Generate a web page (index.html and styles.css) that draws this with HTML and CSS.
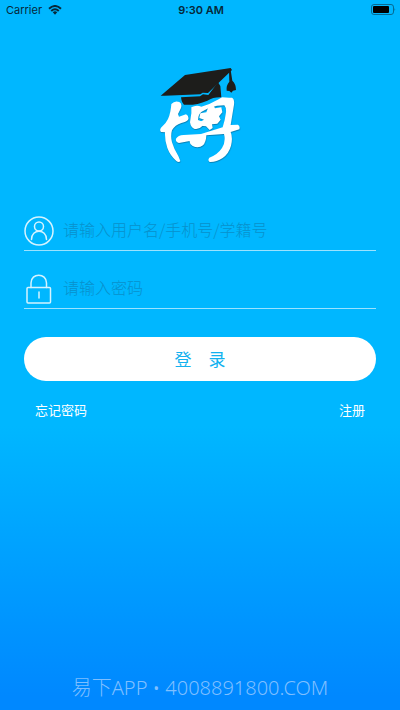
FILE: index.html
```html
<!DOCTYPE html>
<html lang="zh-CN">
<head>
    <meta charset="UTF-8">
    <meta name="viewport" content="width=device-width, initial-scale=1.0">
    <title>登录</title>
    <link rel="stylesheet" href="styles.css">
</head>
<body>
    <header class="status-bar">
        <div class="status-left">
            <span>Carrier</span>
            <svg class="wifi" viewBox="0 0 28 20" aria-hidden="true">
                <path d="M2 7.5Q14-3.5 26 7.5" />
                <path d="M6.5 12Q14 5 21.5 12" />
                <path class="wifi-dot" d="M9.5 14.5Q14 10.5 18.5 14.5L14 19.5Z" />
            </svg>
        </div>
        <span class="status-time">9:30 AM</span>
        <div class="status-right">
            <svg class="battery" viewBox="0 0 25 12" aria-hidden="true">
                <rect class="battery-case" x="0.5" y="0.5" width="22" height="10" rx="2.5" />
                <rect x="2" y="2" width="16" height="7" rx="1" />
                <path class="battery-tip" d="M23.5 4Q25 5.5 23.5 7Z" />
            </svg>
        </div>
    </header>

    <main class="login">
        <svg class="logo" viewBox="0 0 300 330" role="img" aria-label="博">
            <g class="logo-mark">
                <path d="M64 132Q74 121 88 126Q97 131 93 144L84 162L87 170L108 163Q117 167 115 178Q111 186 94 189Q75 195 66 211Q61 228 66 247Q72 268 85 288L91 303Q87 309 79 303Q60 286 52 264Q44 243 45 217L33 216Q28 210 33 203Q48 191 54 177Q62 160 64 132Z" />
                <path d="M124 142Q139 134 154 140L178 132L206 118L216 112Q234 114 246 113Q254 117 252 134L242 195L264 194Q271 198 268 208L242 216Q249 234 243 257Q237 280 218 294Q198 307 179 306Q172 301 178 293Q203 284 216 264Q228 245 222 222L169 226Q168 247 159 256Q145 267 128 258Q118 253 119 243L87 249Q76 246 78 236Q84 226 101 225L153 222L218 202Q225 181 228 157Q229 143 223 136L201 137L175 145L155 155Q144 163 144 180L157 185L156 199Q148 209 134 207Q122 202 120 187L124 160Z" />
                <path d="M151 160L169 157L176 139L190 135L195 145L214 142L217 157L207 169L212 179L202 191L186 193L188 204L179 210L168 199L150 197L148 187L162 179L148 174Z" />
            </g>
            <g class="logo-cap">
                <path d="M32 107L105 45L242 24L246 30L174 99L158 98L151 103L45 107Z" />
                <path d="M93 112L150 109L159 103L175 105L204 67L211 78L214 112Q190 111 172 122Q137 137 102 134Q95 128 93 112Z" />
                <path d="M237 30L242 30L247 62Q258 72 258 90L249 92L244 98L238 93L230 92Q228 76 238 65Z" />
            </g>
        </svg>

        <form class="login-form">
            <div class="field">
                <label for="username" aria-label="用户名">
                    <svg class="field-icon" viewBox="0 0 30 30" aria-hidden="true">
                        <circle cx="15" cy="15" r="14" />
                        <circle cx="15" cy="10.5" r="4.5" />
                        <path d="M7.5 23.5C7.5 12.5 22.5 12.5 22.5 23.5" />
                    </svg>
                </label>
                <input type="text" id="username" placeholder="请输入用户名/手机号/学籍号">
            </div>
            <div class="field">
                <label for="password" aria-label="密码">
                    <svg class="field-icon" viewBox="0 0 30 30" aria-hidden="true">
                        <rect x="3" y="13.5" width="23.5" height="15.5" rx="1" />
                        <path d="M7 13.5V9C7-1.5 22.5-1.5 22.5 9V13.5M15 18V24" />
                    </svg>
                </label>
                <input type="password" id="password" placeholder="请输入密码">
            </div>
            <button type="submit" class="login-button">登&emsp;录</button>
        </form>

        <nav class="links">
            <a href="#forgot">忘记密码</a>
            <a href="#register">注册</a>
        </nav>
    </main>

    <footer class="site-mark">易下APP • 4008891800.COM</footer>
</body>
</html>
```
FILE: styles.css
```css
* {
    box-sizing: border-box;
}

body {
    margin: 0;
    min-height: 100vh;
    display: flex;
    flex-direction: column;
    font-family: "Noto Sans CJK SC", sans-serif;
    color: #fff;
    background: linear-gradient(#00b7ff 0%, #00b7ff 60%, #0088ff 98%);
}

/* Status bar */
.status-bar {
    display: grid;
    grid-template-columns: 1fr auto 1fr;
    align-items: center;
    height: 20px;
    padding: 0 4px 0 6px;
    font-family: Inter, sans-serif;
    font-size: 11px;
    color: #06283a;
}

.status-left {
    display: flex;
    align-items: center;
    gap: 6px;
}

.status-time {
    font-weight: 600;
}

.status-right {
    display: flex;
    justify-content: flex-end;
}

.wifi {
    width: 14px;
    height: 10px;
    fill: none;
    stroke: #06283a;
    stroke-width: 4;
}

.wifi-dot {
    fill: #06283a;
    stroke: none;
}

.battery {
    width: 25px;
    height: 12px;
    fill: #000;
}

.battery-case {
    fill: none;
    stroke: #066b94;
}

.battery-tip {
    fill: #066b94;
}

/* Login */
.login {
    flex: 1;
    display: flex;
    flex-direction: column;
    padding: 40px 24px 0;
}

.logo {
    width: 100px;
    height: 110px;
    align-self: center;
}

.logo-mark {
    fill: #fff;
    filter: drop-shadow(1px 3px 1px #0784bb);
}

.logo-cap {
    fill: #1d1d1b;
}

.login-form {
    display: flex;
    flex-direction: column;
    padding-top: 23px;
}

.field {
    display: flex;
    align-items: center;
    gap: 9px;
    height: 58px;
    padding-top: 18px;
    border-bottom: 1px solid #9be2ff;
}

.field label {
    display: flex;
}

.field-icon {
    width: 30px;
    height: 30px;
    fill: none;
    stroke: #d5f3ff;
    stroke-width: 1.5;
    stroke-linecap: round;
}

.field input {
    flex: 1;
    min-width: 0;
    padding: 0 0 3px;
    border: none;
    outline: none;
    background: none;
    font-family: inherit;
    font-size: 16px;
    font-weight: 300;
    color: #fff;
}

.field input::placeholder {
    color: #0891cc;
}

.login-button {
    height: 44px;
    margin-top: 28px;
    padding-bottom: 2px;
    border: none;
    border-radius: 22px;
    background: #fff;
    color: #12b1ef;
    font-family: inherit;
    font-size: 17px;
    cursor: pointer;
}

.links {
    display: flex;
    justify-content: space-between;
    padding: 19px 11px 0;
    font-size: 13px;
    line-height: 20px;
}

.links a {
    color: #fff;
    text-decoration: none;
}

.site-mark {
    padding-bottom: 8px;
    text-align: center;
    font-family: "Noto Sans", "Noto Sans CJK SC", sans-serif;
    font-size: 20px;
    font-weight: 300;
    line-height: 28px;
    color: #7fbfff;
}
```
